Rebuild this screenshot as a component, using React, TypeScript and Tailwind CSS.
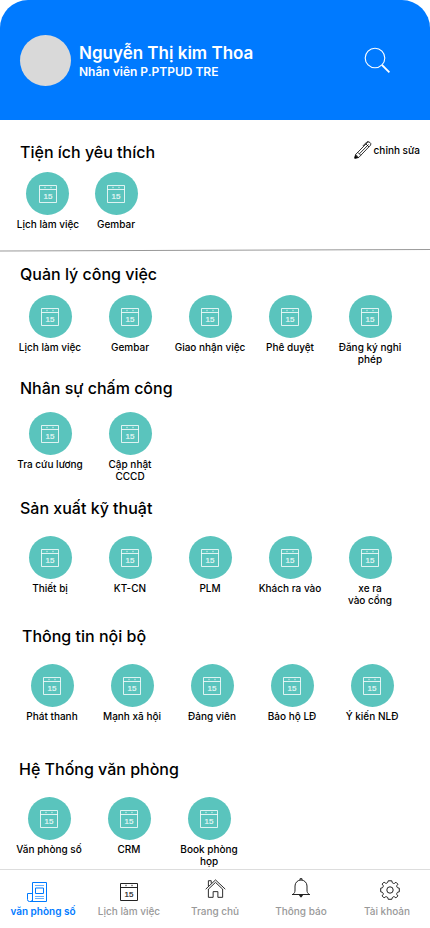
import type { ReactNode } from "react";

type Section = {
  title: string;
  items: string[];
  spacing: string;
  gap: string;
};

const favourites = ["Lịch làm việc", "Gembar"];

const sections: Section[] = [
  {
    title: "Quản lý công việc",
    items: ["Lịch làm việc", "Gembar", "Giao nhận việc", "Phê duyệt", "Đăng ký nghỉ phép"],
    spacing: "pt-[10px] pl-[10px] pr-5",
    gap: "mt-[9px]",
  },
  {
    title: "Nhân sự chấm công",
    items: ["Tra cứu lương", "Cập nhật CCCD"],
    spacing: "pt-[11px] pl-[10px] pr-5",
    gap: "mt-3",
  },
  {
    title: "Sản xuất kỹ thuật",
    items: ["Thiết bị", "KT-CN", "PLM", "Khách ra vào", "xe ra\nvào cổng"],
    spacing: "pt-[14px] pl-[10px] pr-5",
    gap: "mt-4",
  },
  {
    title: "Thông tin nội bộ",
    items: ["Phát thanh", "Mạnh xã hội", "Đảng viên", "Bảo hộ LĐ", "Ý kiến NLĐ"],
    spacing: "pt-[18px] pl-3 pr-[18px]",
    gap: "mt-4",
  },
  {
    title: "Hệ Thống văn phòng",
    items: ["Văn phòng số", "CRM", "Book phòng họp"],
    spacing: "pt-[35px] pl-[9px] pr-[21px]",
    gap: "mt-4",
  },
];

function CalendarIcon({ className }: { className: string }) {
  return (
    <svg viewBox="0 0 18 18" className={className} fill="none" stroke="currentColor" aria-hidden="true">
      <path d="M.5.5h17v17H.5zM.5 4.500h17" />
      <path d="M6 1.800v1.400M12 1.800v1.400" />
      <text
        x="9"
        y="13.800"
        textAnchor="middle"
        fontSize="8"
        fill="currentColor"
        strokeWidth="0.2"
        fontFamily="Liberation Sans, sans-serif"
      >
        15
      </text>
    </svg>
  );
}

function Tile({ label }: { label: string }) {
  return (
    <button type="button" className="flex flex-col items-center gap-[3px]">
      <span className="flex size-[43px] items-center justify-center rounded-full bg-[#5ac4bd]">
        <CalendarIcon className="size-[18px] text-white/80" />
      </span>
      <span className="max-w-[72px] text-center text-[10px] leading-3 font-medium whitespace-pre-line">{label}</span>
    </button>
  );
}

function NavItem({ label, active, children }: { label: string; active?: boolean; children: ReactNode }) {
  return (
    <a
      href="#"
      aria-current={active ? "page" : undefined}
      className={`flex flex-col items-center gap-[3px] pt-2 ${active ? "text-[#007aff]" : "text-[#222]"}`}
    >
      <span className="flex h-6 items-center">{children}</span>
      <span
        className={`text-[10px] leading-3 whitespace-nowrap ${active ? "font-semibold text-[#007aff]" : "font-medium text-[#999]"}`}
      >
        {label}
      </span>
    </a>
  );
}

export default function App() {
  return (
    <div className="flex min-h-screen flex-col bg-white font-[Inter,'Noto_Sans',sans-serif] text-black">
      <header className="flex h-[120px] items-center gap-2 rounded-t-[28px] bg-[#007aff] pr-[39px] pl-5 text-white">
        <div className="size-[51px] shrink-0 rounded-full bg-[#d9d9d9]" />
        <div className="flex-1 pt-[2px]">
          <h1 className="text-[17px] leading-[22px] font-semibold">Nguyễn Thị kim Thoa</h1>
          <p className="text-xs leading-4 font-semibold">Nhân viên P.PTPUD TRE</p>
        </div>
        <button type="button" aria-label="Tìm kiếm">
          <svg viewBox="0 0 27 27" className="size-[27px]" fill="none" stroke="currentColor" aria-hidden="true">
            <circle cx="11" cy="11" r="9.8" strokeWidth="1.1" />
            <path d="m18 18 7.4 7.4" strokeWidth="1.8" />
          </svg>
        </button>
      </header>

      <main className="flex-1">
        <section className="pt-5">
          <div className="flex items-start justify-between pr-[10px] pl-5">
            <h2 className="text-base leading-6 font-medium">Tiện ích yêu thích</h2>
            <button type="button" className="flex items-center gap-[2px] text-[10px] leading-5 font-medium">
              <svg
                viewBox="0 0 18 18"
                className="size-[18px]"
                fill="none"
                stroke="currentColor"
                strokeWidth="0.8"
                strokeLinejoin="round"
                aria-hidden="true"
              >
                <path d="m.8 17.200.8-3.700L13.600 1.300q1-.9 2.400.2t.6 2.600L4.700 16.500z" />
                <path d="m1.600 13.500 3.100 3M4 11.500l2.700 2.700M5.500 12.700 14.500 3.500M8.800 5 13 .8h1.500M12 3l3 3" />
                <path d="m.8 17.200.6-2.600 2.200 2z" fill="currentColor" />
              </svg>
              chỉnh sửa
            </button>
          </div>
          <div className="mt-2 flex pl-[14px]">
            {favourites.map((label) => (
              <div key={label} className="flex w-[68px] justify-center">
                <Tile label={label} />
              </div>
            ))}
          </div>
        </section>

        <svg
          viewBox="0 0 430 3"
          preserveAspectRatio="none"
          className="mt-[19px] block h-[3px] w-full text-[#999]"
          aria-hidden="true"
        >
          <path d="M0 2 430 .5" stroke="currentColor" />
        </svg>

        {sections.map((section) => (
          <section key={section.title} className={section.spacing}>
            <h2 className="pl-[10px] text-base leading-6 font-medium">{section.title}</h2>
            <div className={`grid grid-cols-5 items-start ${section.gap}`}>
              {section.items.map((label) => (
                <Tile key={label} label={label} />
              ))}
            </div>
          </section>
        ))}
      </main>

      <nav className="grid h-[59px] grid-cols-5 border-t border-[#ddd] bg-white">
        <NavItem label="văn phòng số" active>
          <svg viewBox="0 0 20 20" className="mt-1 mr-3 size-5" fill="none" stroke="currentColor" aria-hidden="true">
            <path d="M5.500 19.500V.5h14v19h-17a2 2 0 0 1-2-2v-6h5" />
            <path d="M8 3.500h9M8 16.500h9M8 14.500h9" strokeWidth="0.6" />
            <path d="M8.500 6h8v5.500h-8z" />
            <path d="M5.500 17.500a2 2 0 0 1-2 2" />
          </svg>
        </NavItem>
        <NavItem label="Lịch làm việc">
          <CalendarIcon className="mt-1 size-[18px]" />
        </NavItem>
        <NavItem label="Trang chủ">
          <svg viewBox="0 0 22 20" className="mb-1 h-[19px] w-[21px]" fill="none" stroke="currentColor" aria-hidden="true">
            <path d="M.7 10.700 11 1l10.300 9.700M3.500 10.700 11 3.600l7.500 7.100M3.500 7.500V1.800h3v2.900" />
            <path d="M3.500 10.500v8.800h5v-6h5v6h5v-8.800" />
          </svg>
        </NavItem>
        <NavItem label="Thông báo">
          <svg viewBox="0 0 20 20" className="mb-1 size-5" fill="none" stroke="currentColor" aria-hidden="true">
            <path d="M1 16.500h18M2 16.300c1.500-1 2-2.300 2-4.300V8a6 6 0 0 1 12 0v4c0 2 .5 3.300 2 4.300M9 2V.7h2V2" />
            <path d="M8.500 17.500h3l-1.500 1.700z" fill="currentColor" />
          </svg>
        </NavItem>
        <NavItem label="Tài khoản">
          <svg
            viewBox="0 0 20 20"
            className="ml-[6px] size-5"
            fill="none"
            stroke="currentColor"
            strokeLinejoin="round"
            aria-hidden="true"
          >
            <circle cx="10" cy="10" r="3.200" />
            <path d="M8.200.8h3.600q0 2.200 1.500 2.600t2.600-1.200l2 2q-1.600 1.500-1.100 2.700t2.500 1.300v3.600q-2.100 0-2.500 1.500t1.100 2.600l-2 2q-1.500-1.600-2.700-1.100t-1.400 2.500H8.200q0-2.100-1.500-2.500t-2.600 1.100l-2-2q1.600-1.500 1.100-2.700T.7 11.800V8.200q2.100 0 2.500-1.500T2.100 4.100l2-2q1.500 1.600 2.700 1.100T8.200.8z" />
          </svg>
        </NavItem>
      </nav>
    </div>
  );
}
